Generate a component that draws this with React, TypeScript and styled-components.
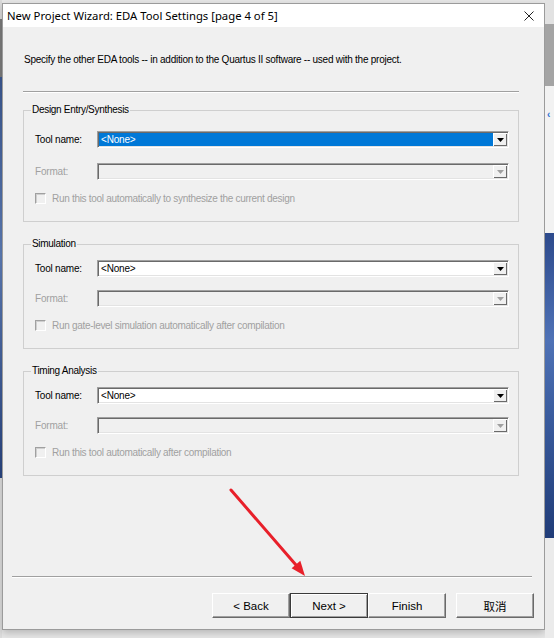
import React from "react";
import styled, { createGlobalStyle } from "styled-components";

const GlobalStyle = createGlobalStyle`
  html, body {
    margin: 0;
    padding: 0;
  }
  body {
    background: #e9e9e9;
    font-family: "Liberation Sans", Arial, sans-serif;
  }
`;

const Desktop = styled.div`
  position: relative;
  width: 554px;
  height: 638px;
  overflow: hidden;
  display: grid;
  grid-template-columns: 2px 543px 1fr;
  grid-template-rows: 3px 627px 1fr;
  background: #e8e8e8;
`;

const LeftEdge = styled.div`
  grid-column: 1;
  grid-row: 1 / 4;
  background: linear-gradient(
    to bottom,
    #dadada 0,
    #dadada 3%,
    #7d7d7d 3%,
    #7d7d7d 12%,
    #3c5a94 12%,
    #5f7fba 40%,
    #2a4683 75%,
    #dedede 75%
  );
`;

const RightStrip = styled.div`
  grid-column: 3;
  grid-row: 1 / 4;
  display: flex;
  flex-direction: column;
`;

const Band = styled.div<{ $h: number; $bg: string }>`
  flex: 0 0 ${(p) => p.$h}px;
  background: ${(p) => p.$bg};
  position: relative;
`;

const CutGlyph = styled.span`
  display: block;
  padding: 23px 0 0 2px;
  font: bold 10px "Liberation Sans", Arial, sans-serif;
  color: #2c6fd1;
`;

const Dialog = styled.div`
  grid-column: 2;
  grid-row: 2;
  box-sizing: border-box;
  display: flex;
  flex-direction: column;
  background: #f0f0f0;
  border: 1px solid #9b9b9b;
  box-shadow: 0 3px 8px rgba(0, 0, 0, 0.22);
`;

const TitleBar = styled.div`
  height: 23px;
  display: flex;
  align-items: center;
  justify-content: space-between;
  background: #ffffff;
  padding-left: 4px;
`;

const Title = styled.span`
  font: 11.3px "Noto Sans", "Liberation Sans", sans-serif;
  color: #000;
`;

const CloseButton = styled.div`
  width: 30px;
  height: 23px;
  display: flex;
  align-items: center;
  justify-content: center;
`;

const Body = styled.div`
  flex: 1;
  display: flex;
  flex-direction: column;
`;

const Content = styled.div`
  padding: 26px 25px 0 20px;
  display: flex;
  flex-direction: column;
`;

const Description = styled.p`
  margin: 0 0 0 1px;
  font-size: 10px;
  line-height: 14px;
  letter-spacing: -0.25px;
  color: #000;
`;

const Rule = styled.div`
  border-top: 1px solid #a0a0a0;
  border-bottom: 1px solid #ffffff;
`;

const TopRule = styled(Rule)`
  margin: 24px 0 11px;
`;

const Group = styled.fieldset<{ $padTop: number }>`
  margin: 0;
  min-width: 0;
  padding: ${(p) => p.$padTop}px 0 16px 0;
  border: 1px solid #cfcfcf;
  & + & {
    margin-top: 16px;
  }
`;

const Legend = styled.legend`
  margin-left: 7px;
  padding: 0 1px;
  font-size: 10px;
  line-height: 12px;
  letter-spacing: -0.3px;
  color: #000;
`;

const Rows = styled.div`
  display: flex;
  flex-direction: column;
  padding: 0 9px 0 11px;
`;

const FieldRow = styled.div<{ $gap?: number }>`
  display: flex;
  align-items: center;
  height: 17px;
  margin-top: ${(p) => p.$gap ?? 0}px;
`;

const FieldLabel = styled.span<{ $disabled?: boolean }>`
  flex: 0 0 62px;
  font-size: 10px;
  letter-spacing: -0.2px;
  color: ${(p) => (p.$disabled ? "#a0a0a0" : "#000")};
`;

const Combo = styled.div<{ $disabled?: boolean }>`
  flex: 1;
  height: 17px;
  box-sizing: border-box;
  display: flex;
  border: 1px solid;
  border-color: #a0a0a0 #ffffff #ffffff #a0a0a0;
  box-shadow: inset 1px 1px 0 #6a6a6a, inset -1px -1px 0 #e3e3e3;
  background: ${(p) => (p.$disabled ? "#f0f0f0" : "#ffffff")};
`;

const ComboText = styled.span<{ $selected?: boolean }>`
  flex: 1;
  margin: 1px 0 1px 1px;
  padding-left: 2px;
  font-size: 10px;
  line-height: 13px;
  letter-spacing: -0.2px;
  color: ${(p) => (p.$selected ? "#ffffff" : "#000")};
  background: ${(p) => (p.$selected ? "#0078d7" : "transparent")};
`;

const DropButton = styled.span`
  flex: 0 0 14px;
  margin: 1px 1px 1px 0;
  display: flex;
  align-items: center;
  justify-content: center;
  background: #f0f0f0;
  box-shadow: inset 1px 1px 0 #ffffff, inset -1px -1px 0 #6a6a6a;
`;

const CheckRow = styled.div<{ $gap: number }>`
  display: flex;
  align-items: center;
  gap: 6px;
  height: 13px;
  margin-top: ${(p) => p.$gap}px;
`;

const CheckBox = styled.span`
  width: 11px;
  height: 11px;
  box-sizing: border-box;
  border: 1px solid;
  border-color: #a0a0a0 #ffffff #ffffff #a0a0a0;
  box-shadow: inset 1px 1px 0 #cfcfcf;
  background: #f0f0f0;
`;

const CheckLabel = styled.span`
  font-size: 10px;
  letter-spacing: -0.3px;
  color: #a0a0a0;
`;

const Footer = styled.div`
  margin-top: auto;
  padding: 0 10px 11px 9px;
`;

const FooterRule = styled(Rule)`
  margin-right: 2px;
`;

const ButtonRow = styled.div`
  display: flex;
  justify-content: flex-end;
  margin-top: 15px;
`;

const Button = styled.button<{ $default?: boolean; $apart?: boolean }>`
  width: 78px;
  height: 25px;
  margin: 0 0 0 ${(p) => (p.$apart ? 10 : 0)}px;
  padding: 0;
  box-sizing: border-box;
  background: #f0f0f0;
  font: 11.5px "Liberation Sans", "Noto Sans CJK SC", sans-serif;
  color: #000;
  border: 1px solid;
  border-color: ${(p) =>
    p.$default ? "#3a3a3a" : "#ffffff #6a6a6a #6a6a6a #ffffff"};
  box-shadow: ${(p) =>
    p.$default
      ? "inset 1px 1px 0 #ffffff, inset -1px -1px 0 #a0a0a0"
      : "inset -1px -1px 0 #a0a0a0"};
`;

const Annotation = styled.svg`
  position: absolute;
  left: 0;
  top: 0;
  pointer-events: none;
`;

const Caret = ({ disabled }: { disabled?: boolean }) => (
  <svg width="7" height="4" viewBox="0 0 7 4">
    <path d="M0 0H7L3.5 4Z" fill={disabled ? "#a0a0a0" : "#000"} />
  </svg>
);

type ToolGroup = {
  title: string;
  check: string;
  selected?: boolean;
  padTop: number;
  fieldGap: number;
  checkGap: number;
};

const groups: ToolGroup[] = [
  {
    title: "Design Entry/Synthesis",
    check: "Run this tool automatically to synthesize the current design",
    selected: true,
    padTop: 15,
    fieldGap: 15,
    checkGap: 12,
  },
  {
    title: "Simulation",
    check: "Run gate-level simulation automatically after compilation",
    padTop: 10,
    fieldGap: 13,
    checkGap: 12,
  },
  {
    title: "Timing Analysis",
    check: "Run this tool automatically after compilation",
    padTop: 10,
    fieldGap: 13,
    checkGap: 12,
  },
];

export default function App() {
  return (
    <>
      <GlobalStyle />
      <Desktop>
        <LeftEdge />
        <Dialog>
          <TitleBar>
            <Title>New Project Wizard: EDA Tool Settings [page 4 of 5]</Title>
            <CloseButton>
              <svg width="10" height="10" viewBox="0 0 10 10">
                <path d="M0.5 0.5L9.5 9.5M9.5 0.5L0.5 9.5" stroke="#222" strokeWidth="1" />
              </svg>
            </CloseButton>
          </TitleBar>
          <Body>
            <Content>
              <Description>
                Specify the other EDA tools -- in addition to the Quartus II software -- used with the project.
              </Description>
              <TopRule />
              {groups.map((g) => (
                <Group key={g.title} $padTop={g.padTop}>
                  <Legend>{g.title}</Legend>
                  <Rows>
                    <FieldRow>
                      <FieldLabel>Tool name:</FieldLabel>
                      <Combo>
                        <ComboText $selected={g.selected}>&lt;None&gt;</ComboText>
                        <DropButton>
                          <Caret />
                        </DropButton>
                      </Combo>
                    </FieldRow>
                    <FieldRow $gap={g.fieldGap}>
                      <FieldLabel $disabled>Format:</FieldLabel>
                      <Combo $disabled>
                        <ComboText />
                        <DropButton>
                          <Caret disabled />
                        </DropButton>
                      </Combo>
                    </FieldRow>
                    <CheckRow $gap={g.checkGap}>
                      <CheckBox />
                      <CheckLabel>{g.check}</CheckLabel>
                    </CheckRow>
                  </Rows>
                </Group>
              ))}
            </Content>
            <Footer>
              <FooterRule />
              <ButtonRow>
                <Button>&lt; Back</Button>
                <Button $default>Next &gt;</Button>
                <Button>Finish</Button>
                <Button $apart>取消</Button>
              </ButtonRow>
            </Footer>
          </Body>
        </Dialog>
        <RightStrip>
          <Band $h={24} $bg="#e2e2e2" />
          <Band $h={62} $bg="#a4a4a4" />
          <Band $h={147} $bg="#f2f2f2">
            <CutGlyph>‹</CutGlyph>
          </Band>
          <Band
            $h={305}
            $bg="linear-gradient(to bottom, #2d4a8c 0%, #4f72b6 35%, #3a5c9e 60%, #203c78 100%)"
          />
          <Band $h={100} $bg="#ebebeb" />
        </RightStrip>
        <Annotation width="554" height="638" viewBox="0 0 554 638">
          <line x1="231" y1="490" x2="296" y2="565" stroke="#e8202a" strokeWidth="3" strokeLinecap="round" />
          <path d="M305 576L291.6 568.3L300.3 560.8Z" fill="#e8202a" />
        </Annotation>
      </Desktop>
    </>
  );
}
